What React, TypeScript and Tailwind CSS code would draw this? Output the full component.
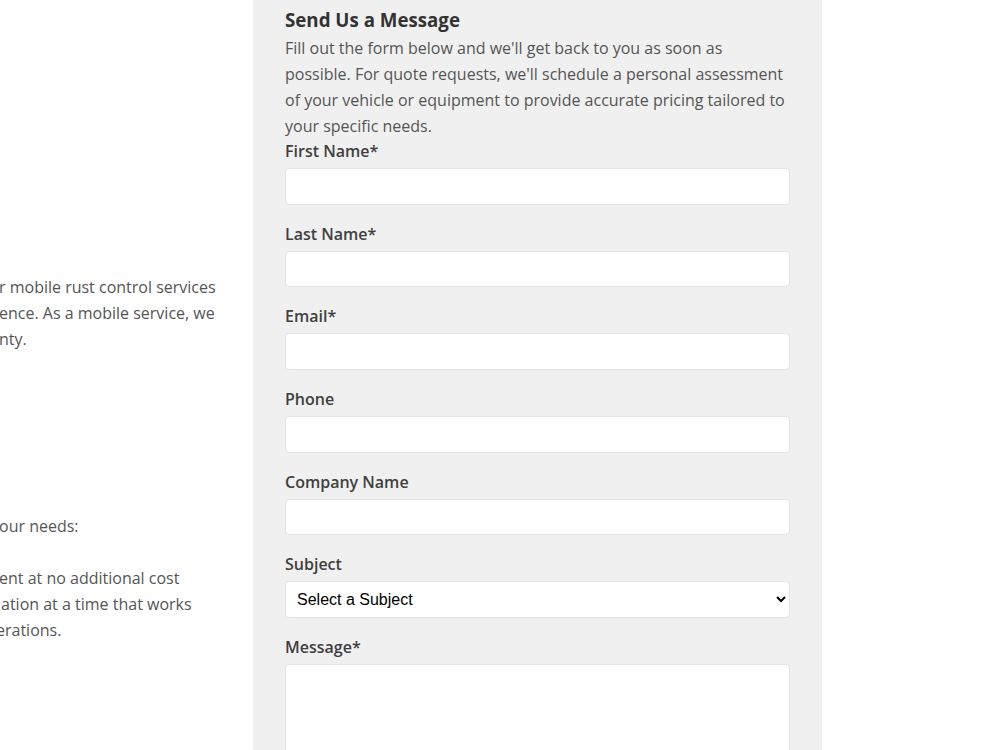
import React from "react";

const font = { fontFamily: '"Open Sans", "Noto Sans", sans-serif' };

function Field({ label, children }: { label: string; children: React.ReactNode }) {
  return (
    <div className="mb-[17px]">
      <label className="block h-[24px] leading-[24px] mb-[5px] text-[16px] font-semibold text-[#3f3f3f]">{label}</label>
      {children}
    </div>
  );
}

const inputCls =
  "block w-full h-[36.67px] bg-white border border-[#e4e4e4] rounded-[4px] px-3 text-[16px] outline-none";

export default function App() {
  return (
    <div className="w-[1000px] h-[750px] bg-white overflow-hidden flex" style={font}>
      <div className="w-[253px] shrink-0 overflow-hidden text-[16px] leading-[26px] text-[#555555]">
        <div className="pt-[274px] whitespace-nowrap -ml-[1px]">
          <div>r mobile rust control services</div>
          <div>ence. As a mobile service, we</div>
          <div>nty.</div>
        </div>
        <div className="mt-[161px] whitespace-nowrap">
          <div className="-ml-[1px]">our needs:</div>
          <div className="mt-[26px] -ml-[1px]">ent at no additional cost</div>
          <div className="ml-[1px]">ation at a time that works</div>
          <div className="-ml-[4px]">erations.</div>
        </div>
      </div>
      <div className="w-[569px] shrink-0 bg-[#f0f0f0] px-[32px] pt-[5px] text-[#444444]">
        <h2 className="text-[18.72px] leading-[30px] font-bold text-[#333333]">Send Us a Message</h2>
        <p className="text-[16px] leading-[26px] text-[#555555]">
          Fill out the form below and we'll get back to you as soon as possible. For quote requests, we'll schedule a
          personal assessment of your vehicle or equipment to provide accurate pricing tailored to your specific needs.
        </p>
        <Field label="First Name*">
          <input className={inputCls} />
        </Field>
        <Field label="Last Name*">
          <input className={inputCls} />
        </Field>
        <Field label="Email*">
          <input className={inputCls} />
        </Field>
        <Field label="Phone">
          <input className={inputCls} />
        </Field>
        <Field label="Company Name">
          <input className={inputCls} />
        </Field>
        <Field label="Subject">
          <select
            className="block w-full h-[36.67px] bg-white border border-[#e4e4e4] rounded-[4px] pl-[7px] pr-[4px] text-[16px] text-black outline-none"
            style={{ fontFamily: '"Liberation Sans", Arial, sans-serif' }}
            defaultValue=""
          >
            <option value="">Select a Subject</option>
            <option>Quote Request</option>
            <option>General Inquiry</option>
          </select>
        </Field>
        <Field label="Message*">
          <textarea className="block w-full h-[150px] bg-white border border-[#e4e4e4] rounded-[4px] px-3 py-2 text-[16px] outline-none resize-none" />
        </Field>
      </div>
      <div className="flex-1 bg-white" />
    </div>
  );
}
